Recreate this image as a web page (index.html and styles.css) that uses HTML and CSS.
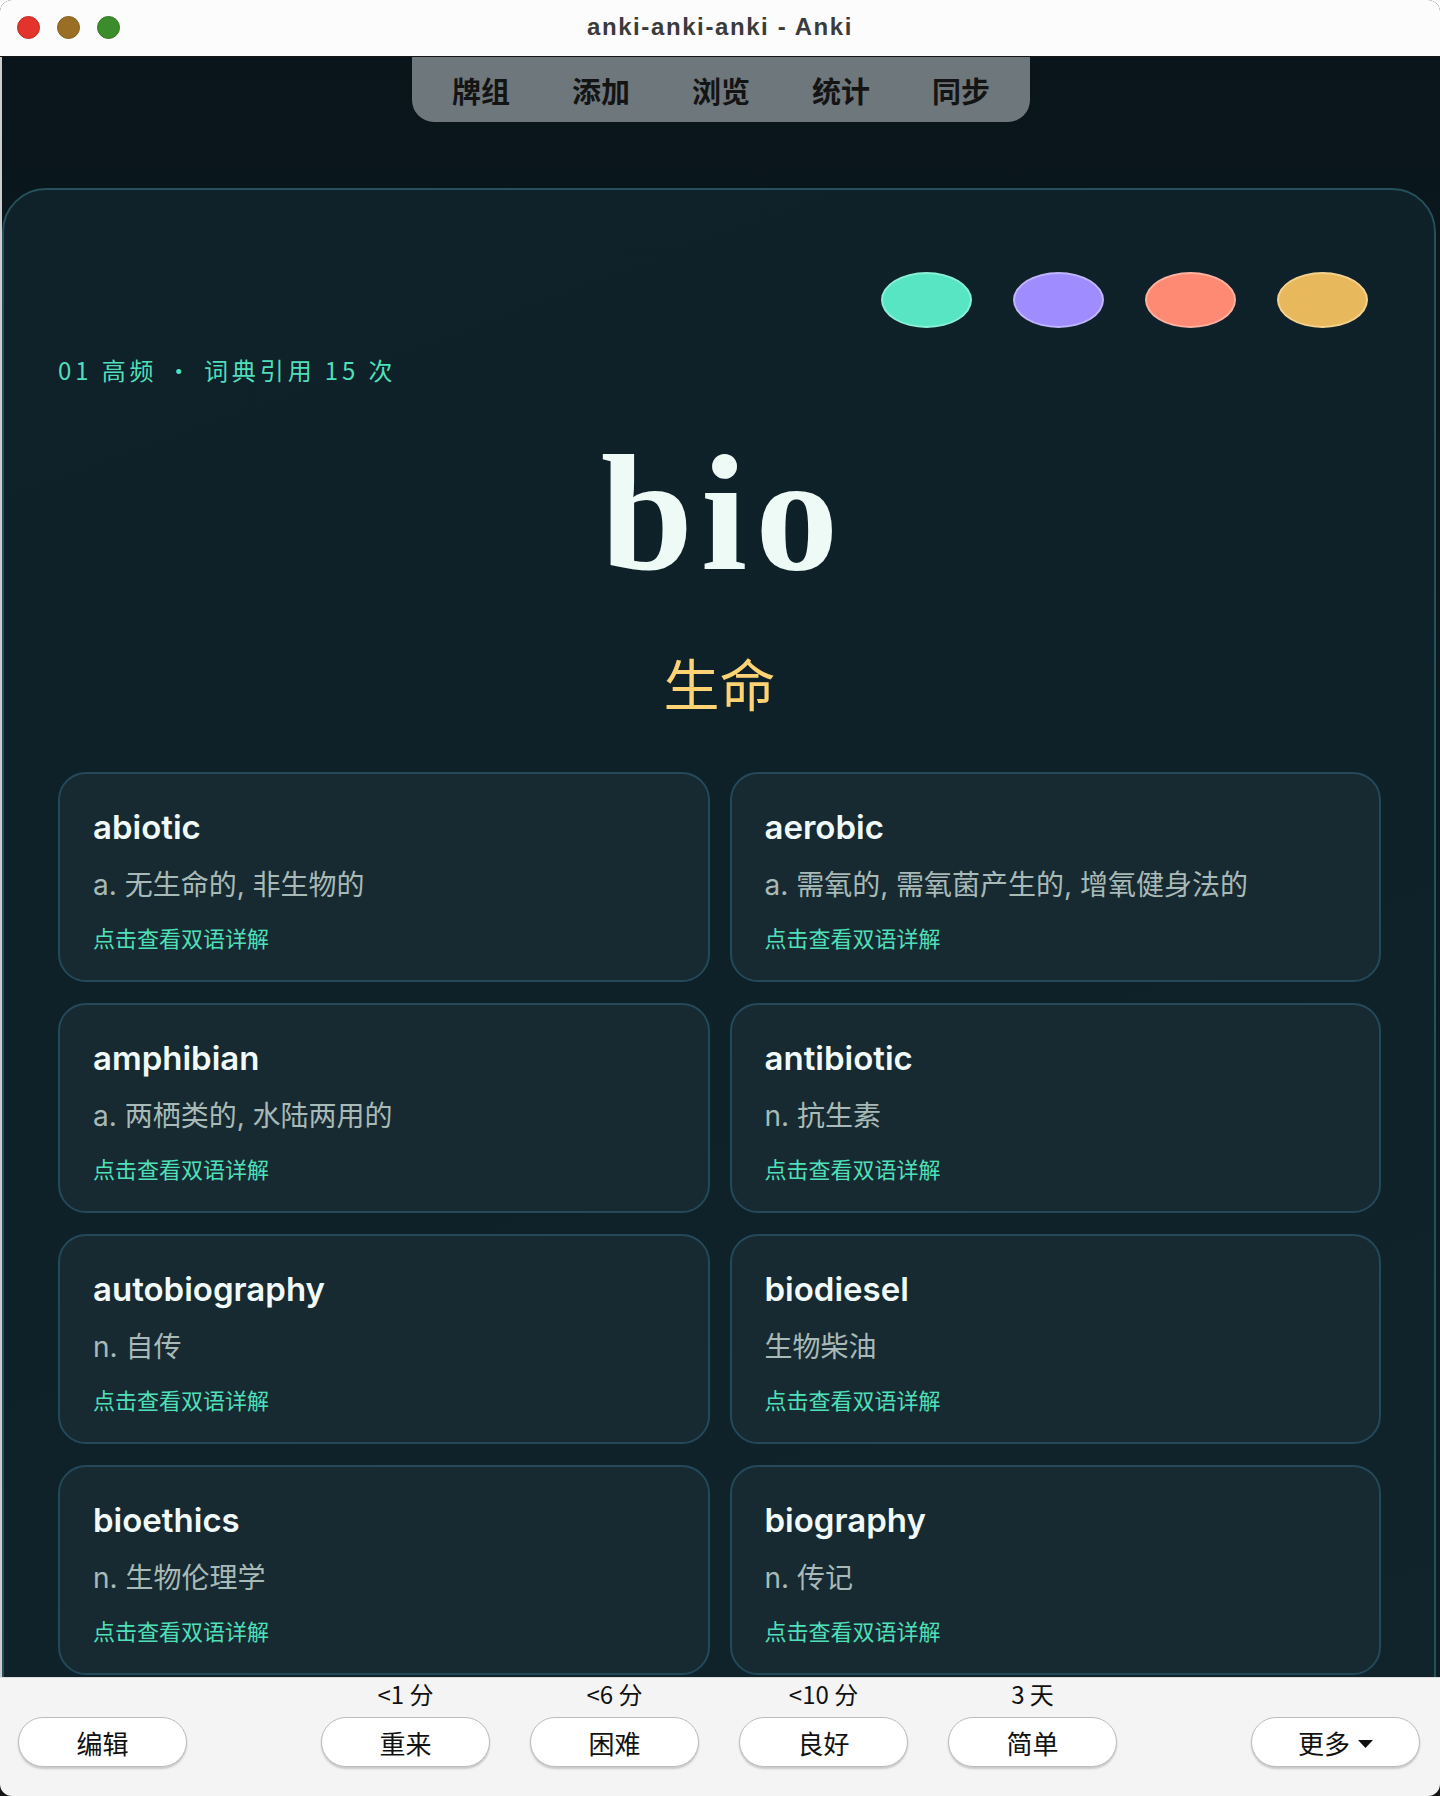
FILE: index.html
```html
<!DOCTYPE html>
<html lang="zh-CN">
<head>
<meta charset="utf-8">
<title>anki-anki-anki - Anki</title>
<link rel="stylesheet" href="styles.css">
</head>
<body>
<div class="window">
  <header class="titlebar">
    <div class="lights">
      <span class="light red"></span>
      <span class="light amber"></span>
      <span class="light green"></span>
    </div>
    <div class="title">anki-anki-anki - Anki</div>
  </header>

  <main class="webview">
    <nav class="toptabs">
      <a class="tab">牌组</a>
      <a class="tab">添加</a>
      <a class="tab">浏览</a>
      <a class="tab">统计</a>
      <a class="tab">同步</a>
    </nav>

    <section class="card">
      <div class="swatches">
        <span class="swatch mint"></span>
        <span class="swatch violet"></span>
        <span class="swatch coral"></span>
        <span class="swatch amber"></span>
      </div>
      <p class="meta">01 高频 · 词典引用 15 次</p>
      <h1 class="root">bio</h1>
      <p class="gloss">生命</p>

      <div class="words">
        <article class="word">
          <h2 class="word-head">abiotic</h2>
          <p class="word-def">a. 无生命的, 非生物的</p>
          <a class="word-link">点击查看双语详解</a>
        </article>
        <article class="word">
          <h2 class="word-head">aerobic</h2>
          <p class="word-def">a. 需氧的, 需氧菌产生的, 增氧健身法的</p>
          <a class="word-link">点击查看双语详解</a>
        </article>
        <article class="word">
          <h2 class="word-head">amphibian</h2>
          <p class="word-def">a. 两栖类的, 水陆两用的</p>
          <a class="word-link">点击查看双语详解</a>
        </article>
        <article class="word">
          <h2 class="word-head">antibiotic</h2>
          <p class="word-def">n. 抗生素</p>
          <a class="word-link">点击查看双语详解</a>
        </article>
        <article class="word">
          <h2 class="word-head">autobiography</h2>
          <p class="word-def">n. 自传</p>
          <a class="word-link">点击查看双语详解</a>
        </article>
        <article class="word">
          <h2 class="word-head">biodiesel</h2>
          <p class="word-def">生物柴油</p>
          <a class="word-link">点击查看双语详解</a>
        </article>
        <article class="word">
          <h2 class="word-head">bioethics</h2>
          <p class="word-def">n. 生物伦理学</p>
          <a class="word-link">点击查看双语详解</a>
        </article>
        <article class="word">
          <h2 class="word-head">biography</h2>
          <p class="word-def">n. 传记</p>
          <a class="word-link">点击查看双语详解</a>
        </article>
      </div>
    </section>
  </main>

  <footer class="answerbar">
    <button class="btn">编辑</button>
    <div class="ease">
      <div class="ease-col"><span class="due">&lt;1 分</span><button class="btn">重来</button></div>
      <div class="ease-col"><span class="due">&lt;6 分</span><button class="btn">困难</button></div>
      <div class="ease-col"><span class="due">&lt;10 分</span><button class="btn">良好</button></div>
      <div class="ease-col"><span class="due">3 天</span><button class="btn">简单</button></div>
    </div>
    <button class="btn more">更多<svg class="caret" width="15" height="8" viewBox="0 0 15 8"><path d="M0 0H15L7.5 8Z" fill="#111"/></svg></button>
  </footer>
</div>
</body>
</html>
```

FILE: styles.css
```css
* {
  box-sizing: border-box;
}

html,
body {
  margin: 0;
  padding: 0;
}

body {
  width: 1440px;
  height: 1796px;
  background: linear-gradient(to bottom, #ffffff 0 50%, #161616 50% 100%);
  font-family: "Noto Sans CJK SC", "Noto Sans", sans-serif;
}

.window {
  width: 1440px;
  height: 1796px;
  display: flex;
  flex-direction: column;
  border-radius: 12px;
  overflow: hidden;
  background: #0a161b;
}

/* ---------- title bar ---------- */
.titlebar {
  position: relative;
  flex: 0 0 57px;
  display: flex;
  align-items: center;
  justify-content: center;
  background: #fcfcfc;
  border-bottom: 1px solid #151515;
}

.lights {
  position: absolute;
  left: 17px;
  top: 16px;
  display: flex;
  gap: 17px;
}

.light {
  width: 23px;
  height: 23px;
  border-radius: 50%;
}

.light.red {
  background: #e2342a;
  border: 1px solid #c42a22;
}

.light.amber {
  background: #9a6f25;
  border: 1px solid #84601f;
}

.light.green {
  background: #3d8c2c;
  border: 1px solid #337824;
}

.title {
  font-family: "Liberation Sans", "Noto Sans", sans-serif;
  font-weight: 700;
  font-size: 24px;
  letter-spacing: 1.6px;
  color: #3b3b3b;
  margin-top: -2px;
}

/* ---------- web content ---------- */
.webview {
  flex: 1 1 auto;
  min-height: 0;
  overflow: hidden;
  border-left: 2px solid #cdcdcd;
  background: linear-gradient(180deg, #09151a 0%, #0b1a20 40%, #0d1d24 100%);
}

.toptabs {
  width: 618px;
  height: 65px;
  margin: 0 auto;
  padding: 0 9px;
  display: flex;
  align-items: center;
  background: #6e777b;
  border-radius: 0 0 22px 22px;
}

.tab {
  flex: 1 1 0;
  text-align: center;
  font-size: 29px;
  font-weight: 700;
  line-height: 40px;
  color: #141414;
}

.card {
  margin: 66px 4px 0 0;
  padding: 82px 53px 0 54px;
  border: 2px solid #25505c;
  border-radius: 44px;
  background: linear-gradient(160deg, #0f2129 0%, #0e2028 45%, #11232b 100%);
  min-height: 1600px;
}

.swatches {
  display: flex;
  justify-content: flex-end;
  gap: 41px;
  margin-right: 13px;
}

.swatch {
  width: 91px;
  height: 56px;
  border-radius: 50%;
  border: 2px solid;
}

.swatch.mint {
  background: #57e5c4;
  border-color: #88f0d6;
}

.swatch.violet {
  background: #9f8cff;
  border-color: #c1b5ff;
}

.swatch.coral {
  background: #ff8a73;
  border-color: #ffb1a1;
}

.swatch.amber {
  background: #e8b85c;
  border-color: #f3d28f;
}

.meta {
  margin: 22px 0 0;
  font-size: 24px;
  line-height: 40px;
  letter-spacing: 3.9px;
  color: #50dfba;
}

.root {
  margin: 41px 0 0;
  padding-left: 8px;
  text-align: center;
  font-family: "Liberation Serif", "DejaVu Serif", serif;
  font-weight: 700;
  font-size: 166px;
  line-height: 164px;
  letter-spacing: 8px;
  color: #eefaf6;
}

.gloss {
  margin: 53px 0 0;
  text-align: center;
  font-size: 56px;
  line-height: 67px;
  color: #ffd274;
}

.words {
  margin-top: 57px;
  display: grid;
  grid-template-columns: 1fr 1fr;
  column-gap: 20px;
  row-gap: 21px;
}

.word {
  height: 210px;
  padding: 33px 33px 26px;
  border: 2px solid #23495a;
  border-radius: 28px;
  background: #172a32;
}

.word-head {
  margin: 0;
  font-family: "Inter", "Noto Sans CJK SC", sans-serif;
  font-weight: 600;
  font-size: 33px;
  line-height: 40px;
  color: #f1faf8;
}

.word-def {
  margin: 19px 0 0;
  font-family: "Inter", "Noto Sans CJK SC", sans-serif;
  font-size: 28px;
  line-height: 38px;
  color: #a8bab7;
}

.word-link {
  display: block;
  margin-top: 20px;
  font-family: "Inter", "Noto Sans CJK SC", sans-serif;
  font-size: 22px;
  line-height: 30px;
  color: #4fe0ba;
}

/* ---------- answer bar ---------- */
.answerbar {
  flex: 0 0 119px;
  display: flex;
  align-items: flex-end;
  justify-content: space-between;
  padding: 0 20px 29px 18px;
  background: #f4f4f4;
  border-top: 1px solid #dcdcdc;
}

.ease {
  display: flex;
  gap: 40px;
}

.ease-col {
  display: flex;
  flex-direction: column;
  align-items: center;
  gap: 9px;
}

.due {
  font-size: 24px;
  line-height: 28px;
  color: #111;
}

.btn {
  width: 169px;
  height: 50px;
  display: flex;
  align-items: center;
  justify-content: center;
  gap: 8px;
  padding: 0;
  border: 1.5px solid #bcbcbc;
  border-radius: 25px;
  background: #ffffff;
  box-shadow: 0 2px 2px rgba(0, 0, 0, 0.18);
  font-family: "Noto Sans CJK SC", sans-serif;
  font-size: 26px;
  color: #111;
}

.caret {
  margin-top: 3px;
}
```
